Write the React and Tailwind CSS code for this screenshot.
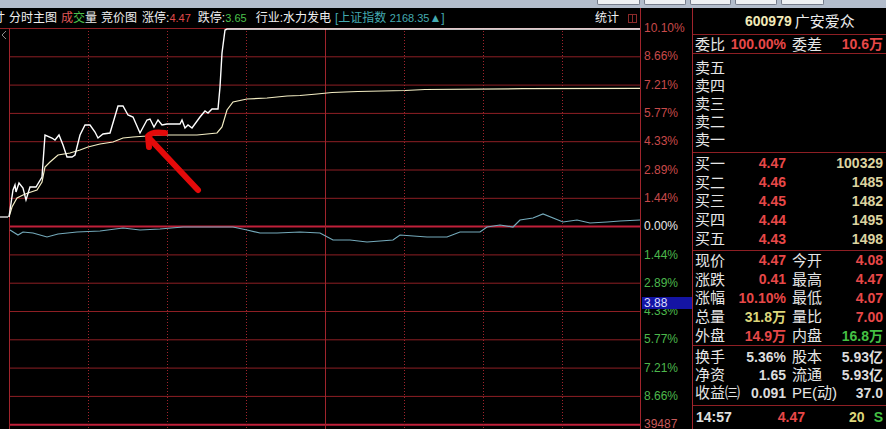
import React from 'react'

const price = [
  [9, 217], [13, 190], [15, 185], [16, 192], [19, 183], [23, 188], [26, 200], [30, 187], [36, 187],
  [42, 177], [45, 135], [52, 138], [55, 140], [59, 135], [63, 145], [67, 157], [72, 157], [75, 155],
  [80, 135], [85, 125], [90, 125], [95, 132], [98, 138], [103, 134], [110, 133], [118, 106], [123, 106],
  [128, 115], [133, 117], [140, 133], [147, 120], [150, 119], [154, 127], [158, 120], [162, 125],
  [167, 124], [180, 124], [182, 120], [185, 128], [188, 125], [192, 128], [200, 117], [205, 111],
  [208, 113], [212, 109], [218, 109], [220, 87], [222, 53], [225, 30], [227, 29], [640, 29],
]

const avg = [
  [9, 217], [12, 207], [17, 198], [23, 195], [28, 193], [37, 190], [42, 182], [45, 167], [50, 162],
  [58, 155], [70, 153], [80, 150], [88, 147], [100, 144], [113, 142], [123, 138], [133, 137],
  [147, 136], [157, 135], [197, 135], [217, 133], [222, 127], [227, 110], [233, 102], [247, 99],
  [267, 98], [287, 96], [300, 95.5], [317, 94], [332, 92.5], [358, 91.5], [405, 90.5], [425, 89.5],
  [523, 88.7], [640, 88.3],
]

const index = [
  [10, 230], [18, 235], [23, 232], [33, 233], [47, 237], [58, 234], [77, 232], [100, 231], [123, 228],
  [140, 230], [160, 229], [183, 227], [207, 227], [233, 227], [247, 230], [260, 233], [277, 233],
  [300, 232], [320, 233], [333, 240], [350, 240], [367, 242], [393, 240], [400, 235], [427, 237],
  [447, 237], [460, 232], [480, 232], [487, 227], [500, 225], [513, 227], [520, 220], [533, 218],
  [543, 214], [563, 222], [577, 220], [590, 223], [607, 222], [620, 221], [640, 220],
]

const pts = (list) => list.map(([x, y]) => `${x},${y}`).join(' ')

const axisLabels = [
  ['10.10%', 'text-[#c84a4a]'], ['8.66%', 'text-[#c84a4a]'], ['7.21%', 'text-[#c84a4a]'],
  ['5.77%', 'text-[#c84a4a]'], ['4.33%', 'text-[#c84a4a]'], ['2.89%', 'text-[#c84a4a]'],
  ['1.44%', 'text-[#c84a4a]'], ['0.00%', 'text-[#e8e8e8]'], ['1.44%', 'text-[#4cb84c]'],
  ['2.89%', 'text-[#4cb84c]'], ['4.33%', 'text-[#4cb84c]'], ['5.77%', 'text-[#4cb84c]'],
  ['7.21%', 'text-[#4cb84c]'], ['8.66%', 'text-[#4cb84c]'], ['39487', 'text-[#c85a5a]'],
]

const sells = ['卖五', '卖四', '卖三', '卖二', '卖一']

const buys = [
  ['买一', '4.47', '100329'],
  ['买二', '4.46', '1485'],
  ['买三', '4.45', '1482'],
  ['买四', '4.44', '1495'],
  ['买五', '4.43', '1498'],
]

const red = 'text-[#e84848]'
const white = 'text-[#dcdcdc]'
const yellow = 'text-[#dcd67a]'
const green = 'text-[#44c044]'

const stats = [
  ['现价', '4.47', red, '今开', '4.08', red],
  ['涨跌', '0.41', red, '最高', '4.47', red],
  ['涨幅', '10.10%', red, '最低', '4.07', red],
  ['总量', '31.8万', yellow, '量比', '7.00', red],
  ['外盘', '14.9万', red, '内盘', '16.8万', green],
]

const info = [
  ['换手', '5.36%', white, '股本', '5.93亿', white],
  ['净资', '1.65', white, '流通', '5.93亿', white],
  ['收益㈢', '0.091', white, 'PE(动)', '37.0', white],
]

function Row({ row, h }) {
  const [l1, v1, c1, l2, v2, c2] = row
  return (
    <div className={`flex items-center pl-[2px] pr-[3px] ${h}`}>
      <div className="w-[91px] flex items-center justify-between">
        <span className="text-[15px] text-[#e6e6e6]">{l1}</span>
        <span className={`text-[14px] font-bold ${c1}`}>{v1}</span>
      </div>
      <div className="ml-[6px] flex-1 flex items-center justify-between">
        <span className="text-[15px] text-[#e6e6e6]">{l2}</span>
        <span className={`text-[14px] font-bold ${c2}`}>{v2}</span>
      </div>
    </div>
  )
}

function Chart() {
  const hLines = Array.from({ length: 15 }, (_, i) => i)
  const vLines = [88, 167, 246, 404, 483, 562]
  return (
    <svg width="640" height="401" className="block">
      {hLines.map((i) => (
        <line
          key={i}
          x1="9"
          x2="640"
          y1={i * 28.3 + 0.5}
          y2={i * 28.3 + 0.5}
          stroke={i === 7 || i === 14 ? '#c0203a' : '#8e1f24'}
          strokeWidth={i === 7 || i === 14 ? 2 : 1}
        />
      ))}
      <line x1="0" x2="9" y1="0.5" y2="0.5" stroke="#8e1f24" />
      {vLines.map((x) => (
        <line key={x} x1={x + 0.5} x2={x + 0.5} y1="0" y2="401" stroke="#a0242c" strokeDasharray="1 2" />
      ))}
      <line x1="9.5" x2="9.5" y1="0" y2="401" stroke="#a0242c" />
      <line x1="325.5" x2="325.5" y1="0" y2="401" stroke="#a0242c" />
      <polyline points="6,3 2,7 6,11" fill="none" stroke="#8a8a8a" strokeWidth="1" />
      <g transform="translate(0,-28)">
        <line x1="0" x2="8" y1="217" y2="217" stroke="#ffffff" strokeWidth="1.2" />
        <polyline points={pts(index)} fill="none" stroke="#74aabb" strokeWidth="1.2" />
        <polyline points={pts(avg)} fill="none" stroke="#f4eec4" strokeWidth="1.2" />
        <polyline points={pts(price)} fill="none" stroke="#ffffff" strokeWidth="1.4" />
        <path d="M150,139 L198,190" stroke="#e40a0a" strokeWidth="6" strokeLinecap="round" />
        <path d="M149,147 L148,136 Q152,131 165,133" fill="none" stroke="#e40a0a" strokeWidth="6" strokeLinecap="round" strokeLinejoin="round" />
      </g>
    </svg>
  )
}

export default function App() {
  return (
    <div className="w-[886px] h-[429px] overflow-hidden bg-black flex flex-col font-['Liberation_Sans','Noto_Sans_CJK_SC',sans-serif] leading-none">
      <div className="h-[8px] bg-[#b3bdcc] flex pl-[597px] gap-[4px] shrink-0">
        {[43, 42, 41, 42, 43].map((w, i) => (
          <div key={i} style={{ width: w }} className="h-[5px] bg-[#eef0f3] border border-t-0 border-[#767d8c] rounded-b-[2px]" />
        ))}
      </div>
      <div className="flex flex-1 min-h-0">
        <div className="w-[640px] flex flex-col">
          <div className="h-[20px] flex items-center whitespace-nowrap text-[12px] text-[#f0f0f0]">
            <span className="-ml-[7px]">寸</span>
            <span className="ml-[4px]">分时主图</span>
            <span className="ml-[4px]">
              <span className="text-[#e05a5a]">成</span>
              <span className="text-[#4cc04c]">交</span>
              量
            </span>
            <span className="ml-[4px]">竞价图</span>
            <span className="ml-[5px]">涨停:</span>
            <span className="text-[11px] text-[#e04a4a]">4.47</span>
            <span className="ml-[7px]">跌停:</span>
            <span className="text-[11px] text-[#4cc04c]">3.65</span>
            <span className="ml-[9px]">行业:水力发电</span>
            <span className="ml-[4px] text-[#44aab0]">
              [上证指数 <span className="text-[11px]">2168.35</span>▲]
            </span>
            <span className="ml-auto">统计</span>
            <span className="ml-[9px] mr-[3px] w-[9px] h-[9px] border border-[#8a2a2a] flex justify-center">
              <span className="w-px h-full bg-[#8a2a2a]" />
            </span>
          </div>
          <Chart />
        </div>

        <div className="relative w-[53px] border-l border-r border-[#a0242c] pt-[6px]">
          {axisLabels.map(([t, c], i) => (
            <div key={i} className={`h-[28.3px] flex items-center pl-[3px] text-[12px] ${c}`}>
              {t}
            </div>
          ))}
          <div className="absolute left-[1px] top-[289px] w-[50px] h-[12px] bg-[#1414a4] flex items-center pl-[2px] text-[12px] text-[#dcdcff]">
            3.88
          </div>
        </div>

        <div className="flex-1 flex flex-col">
          <div className="h-[27px] shrink-0 border-b border-[#8e1f24] flex items-center pl-[52px]">
            <span className="text-[14px] font-bold text-[#f2eab8]">600979</span>
            <span className="ml-[3px] text-[15px] text-[#ececec]">广安爱众</span>
          </div>
          <div className="border-b border-[#8e1f24]">
            <Row row={['委比', '100.00%', red, '委差', '10.6万', red]} h="h-[18px]" />
          </div>
          <div className="border-b border-[#8e1f24] pt-[4px] pb-[4px]">
            {sells.map((s) => (
              <div key={s} className="h-[18px] flex items-center pl-[2px] text-[15px] text-[#e6e6e6]">
                {s}
              </div>
            ))}
          </div>
          <div className="border-b border-[#8e1f24] pt-[1px] pb-[2px]">
            {buys.map(([l, p, v]) => (
              <div key={l} className="h-[18.8px] flex items-center pl-[2px] pr-[3px]">
                <div className="w-[91px] flex items-center justify-between">
                  <span className="text-[15px] text-[#e6e6e6]">{l}</span>
                  <span className="text-[14px] font-bold text-[#e84848]">{p}</span>
                </div>
                <span className="flex-1 text-right text-[14px] font-bold text-[#dcd4a0]">{v}</span>
              </div>
            ))}
          </div>
          <div className="border-b border-[#8e1f24]">
            {stats.map((r) => (
              <Row key={r[0]} row={r} h="h-[18.8px]" />
            ))}
          </div>
          <div className="border-b border-[#8e1f24] pt-[2px] pb-[3px]">
            {info.map((r) => (
              <Row key={r[0]} row={r} h="h-[18px]" />
            ))}
          </div>
          <div className="flex-1 flex items-center pl-[3px] pr-[3px] text-[14px] font-bold">
            <span className="text-[#e0e0e0]">14:57</span>
            <span className="ml-[46px] text-[#e84848]">4.47</span>
            <span className="ml-auto text-[#dcd67a]">20</span>
            <span className="ml-[9px] text-[#44c044]">S</span>
          </div>
        </div>
      </div>
    </div>
  )
}
